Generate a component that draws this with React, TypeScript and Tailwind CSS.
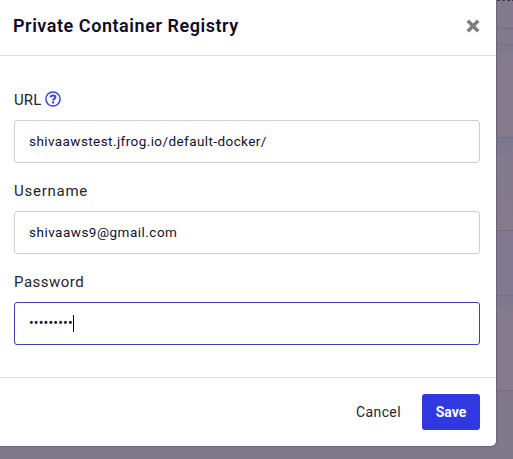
import React from "react";

const strips = [
  "h-[29px] bg-[#83798e] border-[#746c80]",
  "h-4 bg-[#83798e] border-[#777084]",
  "h-[93px] bg-gradient-to-b from-[#7b7891] via-[#857b8c] via-20% to-[#867b8c] border-[#756d80]",
  "h-[93px] bg-gradient-to-b from-[#7b7891] via-[#827a8d] via-20% to-[#867b8c] border-[#746d80]",
  "h-[65px] bg-[#807991] border-[#767087]",
  "h-[95px] bg-gradient-to-b from-[#7b7891] via-[#857b8c] via-20% to-[#857b8c] border-[#756d80]",
];

function HelpIcon() {
  return (
    <svg viewBox="0 0 16 16" className="h-4 w-4" fill="none" stroke="#3c46ce">
      <circle cx="8" cy="8" r="7.1" strokeWidth="1.5" />
      <path d="M5.5 6.3C5.7 5.1 6.7 4.5 8 4.5c1.4 0 2.4.7 2.4 1.8 0 1.6-2.3 1.5-2.3 3.1" strokeWidth="2" />
      <circle cx="8.1" cy="11.5" r="1.15" fill="#3c46ce" stroke="none" />
    </svg>
  );
}

function Field({ label, border, children }: { label: React.ReactNode; border: string; children: React.ReactNode }) {
  return (
    <div>
      <div className="flex h-[29px] items-center pb-[1px] text-[15px] leading-5 text-[#24242c]">{label}</div>
      <div className={"mt-[5px] flex h-[43px] items-center rounded-[3px] border bg-white px-[14px] text-[13.5px] text-[#14102c] " + border}>
        {children}
      </div>
    </div>
  );
}

export default function App() {
  return (
    <div className="relative flex h-[459px] w-[513px] overflow-hidden bg-[#80788b] font-['Roboto','Liberation_Sans',sans-serif]">
      <div className="ml-auto w-4">
        {strips.map((s) => (
          <div key={s} className={"border-b " + s} />
        ))}
      </div>
      <div className="absolute top-0 left-3 h-px w-full border-t border-dashed border-[#3d3846]" />
      <section className="absolute top-0 left-0 h-[446px] w-[496px] rounded-br-[5px] bg-white shadow-[0_0_1px_1px_#6a637a]">
        <header className="flex h-14 items-center justify-between border-b border-[#dedee2] pr-4 pb-[3px] pl-[13px]">
          <h1 className="pb-px text-[18px] font-semibold tracking-[0.55px] text-[#120a2a]">Private Container Registry</h1>
          <svg viewBox="0 0 14 14" className="h-[14px] w-[14px]" stroke="#7e7e82" strokeWidth="3.6">
            <path d="M1.8 1.8l10.4 10.4M12.2 1.8L1.8 12.2" />
          </svg>
        </header>
        <main className="flex h-[321px] flex-col gap-[14px] pr-4 pl-[14px] pt-[30px]">
          <Field
            border="border-[#cfcfd3]"
            label={<><span className="mr-1 tracking-[0.1px]">URL</span><span className="pb-0.5"><HelpIcon /></span></>}
          >
            <span className="tracking-[0.42px]">shivaawstest.jfrog.io/default-docker/</span>
          </Field>
          <Field border="border-[#cfcfd3]" label={<span className="tracking-[0.75px]">Username</span>}>
            <span className="tracking-[0.49px]">shivaaws9@gmail.com</span>
          </Field>
          <Field border="border-[#3c42a8]" label={<span className="tracking-[0.5px]">Password</span>}>
            <span className="text-[14px] tracking-[0.15px]">•••••••••</span>
            <span className="h-[17px] w-px bg-black" />
          </Field>
        </main>
        <footer className="flex h-[69px] items-center justify-end gap-[21px] border-t border-[#dedee2] pr-4">
          <button className="pt-px text-[14px] tracking-[0.4px] text-[#24242c]">Cancel</button>
          <button className="h-9 w-[58px] rounded-[3px] bg-[#2f39df] pt-px text-[14px] font-bold text-white">Save</button>
        </footer>
      </section>
    </div>
  );
}
